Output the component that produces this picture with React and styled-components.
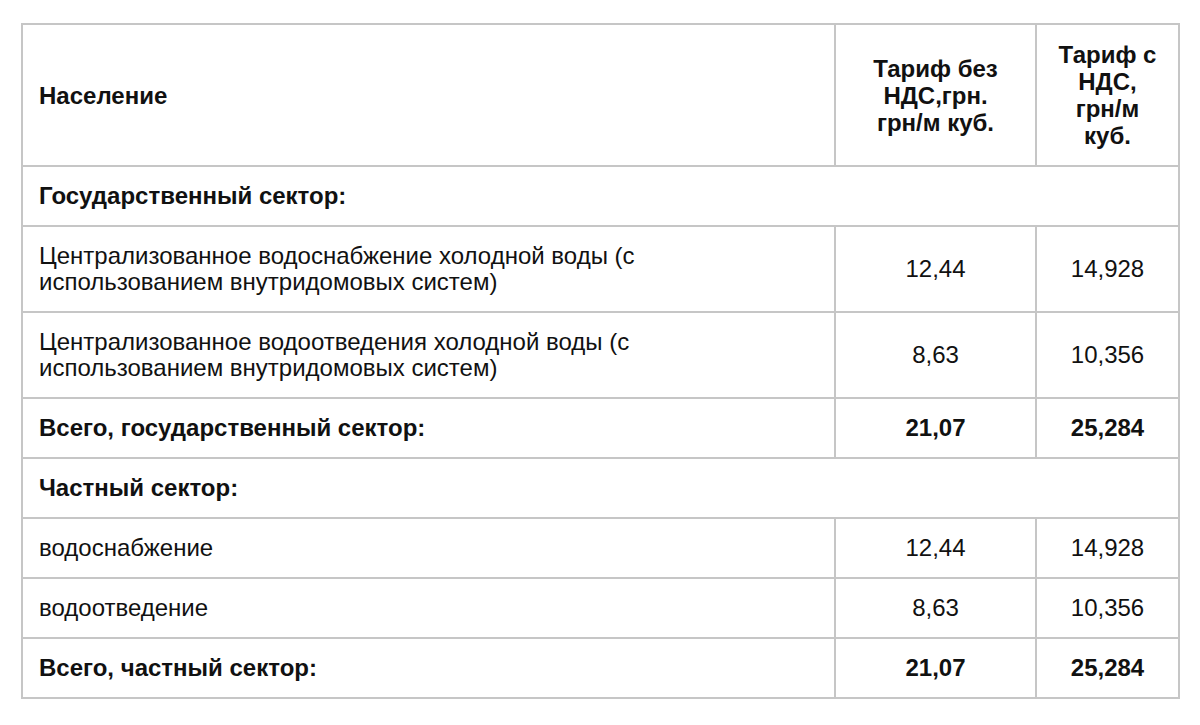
import React from 'react';
import styled, { createGlobalStyle } from 'styled-components';

const GlobalStyle = createGlobalStyle`
    body {
        margin : 0;
        background : #ffffff;
        font-family : 'Liberation Sans', Arial, sans-serif;
        color : #111111;
    }
`

const rows = [
    { type: 'section', label: 'Государственный сектор:' },
    { label: 'Централизованное водоснабжение холодной воды (с использованием внутридомовых систем)', a: '12,44', b: '14,928' },
    { label: 'Централизованное водоотведения холодной воды (с использованием внутридомовых систем)', a: '8,63', b: '10,356' },
    { type: 'total', label: 'Всего, государственный сектор:', a: '21,07', b: '25,284' },
    { type: 'section', label: 'Частный сектор:' },
    { label: 'водоснабжение', a: '12,44', b: '14,928' },
    { label: 'водоотведение', a: '8,63', b: '10,356' },
    { type: 'total', label: 'Всего, частный сектор:', a: '21,07', b: '25,284' },
];

const App = () => {
    return (
        <Page>
            <GlobalStyle />
            <Table>
                <colgroup>
                    <col style={{ width: 813 }} />
                    <col style={{ width: 201 }} />
                    <col style={{ width: 143 }} />
                </colgroup>
                <thead>
                    <tr>
                        <HeadCell>Население</HeadCell>
                        <HeadCell center>Тариф без НДС,грн. <NoWrap>грн/м</NoWrap> куб.</HeadCell>
                        <HeadCell center>Тариф с НДС, <NoWrap>грн/м</NoWrap> куб.</HeadCell>
                    </tr>
                </thead>
                <tbody>
                    {rows.map((row, i) => {
                        if (row.type === 'section') {
                            return (
                                <tr key={i}>
                                    <Cell bold colSpan={3}>{row.label}</Cell>
                                </tr>
                            );
                        }
                        const bold = row.type === 'total';
                        return (
                            <tr key={i}>
                                <Cell bold={bold}>{row.label}</Cell>
                                <Cell bold={bold} center>{row.a}</Cell>
                                <Cell bold={bold} center>{row.b}</Cell>
                            </tr>
                        );
                    })}
                </tbody>
            </Table>
        </Page>
    )
}

const Page = styled.div`
    padding : 23px 0 0 21px;
`

const Table = styled.table`
    width : 1157px;
    table-layout : fixed;
    border-collapse : collapse;
    border : 2px solid #c6c6c6;
`

const NoWrap = styled.span`
    white-space : nowrap;
`

const HeadCell = styled.th`
    border : 2px solid #c6c6c6;
    padding : 16px;
    font-size : 24px;
    line-height : 27px;
    font-weight : 700;
    text-align : ${props => props.center ? 'center' : 'left'};
    vertical-align : middle;
`

const Cell = styled.td`
    border : 2px solid #c6c6c6;
    padding : 16px;
    font-size : 24px;
    line-height : 26px;
    font-weight : ${props => props.bold ? 700 : 400};
    text-align : ${props => props.center ? 'center' : 'left'};
    vertical-align : middle;
`

export default App;
